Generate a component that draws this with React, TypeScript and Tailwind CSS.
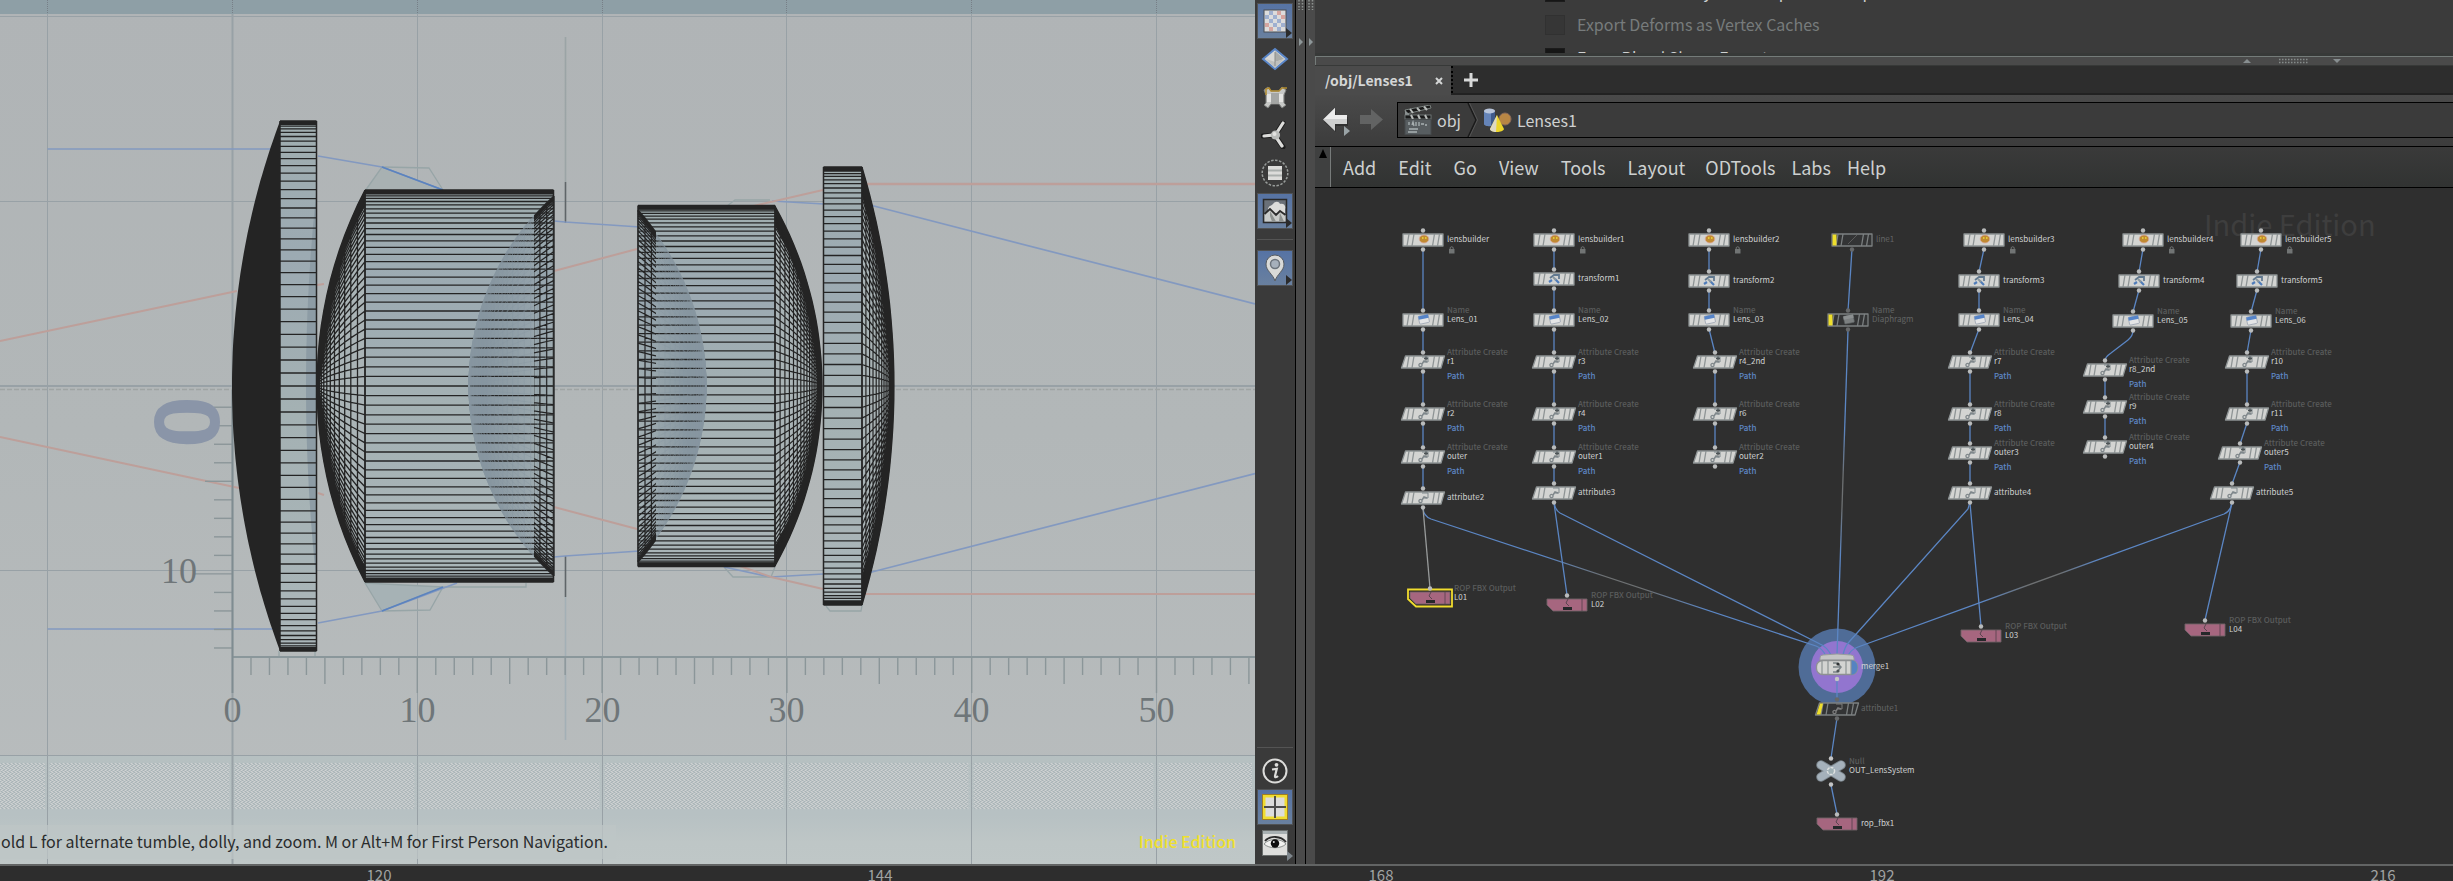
import React from "react";

/* ------------------------------------------------------------------ */
/* Lens geometry                                                       */
/* ------------------------------------------------------------------ */

const AXIS = 386;
const SEGMENTS = 128;
const INK = "#242424";

const STEPS = Array.from({ length: SEGMENTS / 2 + 1 }, (_, i) => i - SEGMENTS / 4);

function sagDepth(r: number, half: number, sag: number) {
  const radius = (half * half + sag * sag) / (2 * sag);
  return Math.sqrt(radius * radius - r * r) - (radius - sag);
}

function capPath(rim: number, dir: number, sag: number, half: number) {
  const pts: string[] = [];
  for (let i = -40; i <= 40; i++) {
    const r = (half * i) / 40;
    pts.push(`${(rim + dir * sagDepth(r, half, sag)).toFixed(1)},${(AXIS + r).toFixed(1)}`);
  }
  return `M${pts.join("L")}Z`;
}

function meshPath(rim: number, dir: number, sag: number, half: number, rings: number) {
  let d = "";
  for (let j = 1; j <= rings; j++) {
    const r = (half * j) / rings;
    const x = (rim + dir * sagDepth(r, half, sag)).toFixed(1);
    d += `M${x},${(AXIS - r).toFixed(1)}V${(AXIS + r).toFixed(1)}`;
  }
  for (const k of STEPS) {
    const s = Math.sin((k * 2 * Math.PI) / SEGMENTS);
    for (let j = 0; j <= rings; j++) {
      const r = (half * j) / rings;
      const x = (rim + dir * sagDepth(r, half, sag)).toFixed(1);
      d += `${j === 0 ? "M" : "L"}${x},${(AXIS + r * s).toFixed(1)}`;
    }
  }
  return d;
}

function barrelPath(x1: number, x2: number, half: number) {
  return STEPS.map((k) => {
    const y = AXIS + half * Math.sin((k * 2 * Math.PI) / SEGMENTS);
    return `M${x1},${y.toFixed(1)}H${x2}`;
  }).join("");
}

function Barrel({ x1, x2, half }: { x1: number; x2: number; half: number }) {
  return (
    <g fill="none" stroke={INK}>
      <path d={barrelPath(x1, x2, half)} strokeWidth={1.3} />
      <path d={`M${x1},${AXIS - half + 2}H${x2}M${x1},${AXIS + half - 2}H${x2}`} strokeWidth={4} />
      <path d={`M${x1},${AXIS - half}V${AXIS + half}M${x2},${AXIS - half}V${AXIS + half}`} strokeWidth={1.5} />
    </g>
  );
}

const GRID_X = [47.5, 232.5, 417.5, 602.5, 786.5, 971.5, 1156.5];

function SceneDrawing() {
  const hTicks = Array.from({ length: 55 }, (_, i) => i + 1);
  const vTicks = Array.from({ length: 14 }, (_, i) => i + 1);
  return (
    <svg
      className="absolute inset-0 h-full w-full"
      viewBox="0 0 1255 864"
      preserveAspectRatio="xMinYMin slice"
      aria-label="Side view of the lens stack"
    >
      <defs>
        <linearGradient id="sky" x1="0" y1="0" x2="0" y2="1">
          <stop offset="0" stopColor="#b0b4b6" />
          <stop offset="0.5" stopColor="#b2b7b8" />
          <stop offset="1" stopColor="#b9bdbe" />
        </linearGradient>
        <linearGradient id="floor" x1="0" y1="0" x2="0" y2="1">
          <stop offset="0" stopColor="#b6c0c1" />
          <stop offset="0.55" stopColor="#b7c1c3" />
          <stop offset="0.8" stopColor="#bec6c6" />
          <stop offset="1" stopColor="#bfc7c7" />
        </linearGradient>
        <linearGradient id="glass" x1="0" y1="0" x2="0" y2="1">
          <stop offset="0" stopColor="#a0aeb0" />
          <stop offset="0.25" stopColor="#9caab2" />
          <stop offset="0.55" stopColor="#a4b1b3" />
          <stop offset="0.9" stopColor="#a9b5b8" />
        </linearGradient>
        <linearGradient id="hollowL" x1="0" y1="0" x2="1" y2="0">
          <stop offset="0" stopColor="#8796a0" />
          <stop offset="0.18" stopColor="#8796a0" />
          <stop offset="1" stopColor="#8796a0" stopOpacity="0.1" />
        </linearGradient>
        <linearGradient id="hollowR" x1="1" y1="0" x2="0" y2="0">
          <stop offset="0" stopColor="#8796a0" />
          <stop offset="0.25" stopColor="#8796a0" />
          <stop offset="1" stopColor="#8796a0" stopOpacity="0.1" />
        </linearGradient>
        <pattern id="grain" width="4" height="4" patternUnits="userSpaceOnUse">
          <rect width="4" height="4" fill="#bcc3c4" />
          <path d="M0 .5h1M2 1.5h1M1 2.5h1M3 3.5h1" stroke="#cfd2d3" />
          <path d="M2 .5h1M0 1.5h1M3 2.5h1M1 3.5h1" stroke="#a7b3b7" />
        </pattern>
        <clipPath id="nearRim2">
          <rect x="534" y="186" width="22" height="400" />
        </clipPath>
        <clipPath id="nearRim3">
          <rect x="636" y="202" width="20" height="370" />
        </clipPath>
      </defs>

      <rect width="1255" height="864" fill="url(#sky)" />
      <rect width="1255" height="14" fill="#8e9fa6" />
      <rect y="756" width="1255" height="108" fill="url(#floor)" />
      {GRID_X.map((x, i) => (
        <rect key={x} x={x + 2} y="763" width={(GRID_X[i + 1] ?? 1255) - x - 5} height="46" fill="url(#grain)" />
      ))}
      <rect x="0" y="763" width="45" height="46" fill="url(#grain)" />

      {/* grid */}
      <g stroke="#98a1a6" fill="none">
        {GRID_X.map((x) => (
          <path key={x} d={`M${x},14V864`} strokeWidth={x === 232.5 ? 2 : 1} />
        ))}
        {GRID_X.map((x) => (
          <path key={x} d={`M${x},0V14`} stroke="#777f87" strokeDasharray="1 1" />
        ))}
        <path d="M0,16.5H1255M0,201.5H1255M0,570.5H1255M0,755.5H1255" strokeWidth="1" />
        <path d="M0,386H1255" strokeWidth="2" />
        <path d="M0,389.5H1255" stroke="#9fa4a3" strokeWidth="1.5" strokeDasharray="5 2" />
      </g>
      <rect y="825" width="616" height="34" fill="#bec6c6" opacity="0.75" />

      {/* aperture stop */}
      <g fill="none" strokeWidth="1.6">
        <path d="M565.5,37V182" stroke="#9ba4a6" />
        <path d="M565.5,597V740" stroke="#a3b0b6" />
        <path d="M565.5,182V223M565.5,556V597" stroke="#5f6568" />
      </g>

      {/* prescription outline behind the meshes */}
      <g stroke="#97a5a7" strokeWidth="1.3">
        <path d="M365,191L382,167L443,190Z" fill="#a8b1b2" />
        <path d="M382,167L429,168L443,190" fill="none" />
        <path d="M365,583L382,611L443,587Z" fill="#a6b2b5" />
        <path d="M382,611L430,610L443,587H526V583" fill="none" />
        <path d="M727,206L735,200H770M724,567L733,577H771L775,567M279,651V657H315V651M826,606L830,611H861L863,600" fill="none" />
      </g>

      {/* rays */}
      <g fill="none" stroke="#8399c0" strokeWidth="1.7">
        <path d="M47.5,149H272M318,156L382,167L443,190M554,221L565,222L640,227M772,201L824,204M870,205L1255,304" />
        <path d="M47.5,629H272M318,623L382,611L457,583M554,557L565,556L640,551M724,567L771,577L823,574M868,573L1255,473.500" />
      </g>
      <path d="M382,167L443,190M382,611L443,587" fill="none" stroke="#5b83bf" strokeWidth="1.5" />
      <g fill="none" stroke="#bd9f9a" strokeWidth="2">
        <path d="M0,341L237,291M317,285L324,284M554,271L637,249M745,208L823,190" />
        <path d="M865,184H1255" strokeWidth="2.6" />
        <path d="M0,437L239,488M318,493L324,495M554,507L637,529M740,566L771,577L823,589M865,594H1255" />
      </g>

      {/* rulers */}
      <g stroke="#8b9699" strokeWidth="1.4" fill="none">
        <path d="M232,657H1255" stroke="#8a979b" strokeWidth="1.8" />
        {hTicks.map((i) => (
          <path key={i} d={`M${232.5 + i * 18.48},657V${i % 10 === 0 ? 693 : i % 5 === 0 ? 684 : 675}`} />
        ))}
        {vTicks.map((i) => (
          <path key={i} d={`M${i === 10 ? 195 : i === 5 ? 205 : 214},${388.7 + i * 18.52}H232`} />
        ))}
        <path d="M232.500,390V693" stroke="#7f8c91" strokeWidth="1.8" />
      </g>
      <g fill="#6f7679" fontFamily="Liberation Serif, serif" fontSize="36" textAnchor="middle">
        {["0", "10", "20", "30", "40", "50"].map((t, i) => (
          <text key={t} x={GRID_X[i + 1]} y="722">
            {t}
          </text>
        ))}
        <text x="179" y="583">
          10
        </text>
      </g>
      <text
        x="187"
        y="422"
        transform="rotate(90 187 422)"
        fontFamily="Liberation Sans, sans-serif"
        fontWeight="700"
        fontSize="93"
        textAnchor="middle"
        dy="32"
        fill="#8a95a8"
      >
        0
      </text>

      {/* element 1 */}
      <rect x="280" y="121" width="37" height="530" fill="url(#glass)" />
      <path d={capPath(317, -1, 11, 200)} fill="#8d9ca5" />
      <path d={capPath(280, -1, 48, 265)} fill={INK} />
      <Barrel x1={280} x2={316.500} half={265} />

      {/* element 2 */}
      <path d={capPath(365, -1, 48, 196)} fill={INK} />
      <path d={capPath(365, -1, 46, 180)} fill="#aab4b6" />
      <rect x="365" y="190" width="189" height="392" fill="url(#glass)" />
      <path d={capPath(554, -1, 85, 192)} fill="url(#hollowL)" />
      <Barrel x1={365} x2={553.500} half={196} />
      <path d={meshPath(365, -1, 48, 196, 13)} fill="none" stroke={INK} strokeWidth="1.3" />
      <path d={meshPath(554, -1, 85, 190, 24)} fill="none" stroke="#8797a1" strokeWidth="0.5" opacity="0.8" />
      <path d={meshPath(554, -1, 85, 190, 28)} fill="none" stroke={INK} strokeWidth="1.2" clipPath="url(#nearRim2)" />

      {/* element 3 */}
      <path d={capPath(775, 1, 47, 180)} fill={INK} />
      <path d={capPath(775, 1, 42, 160)} fill="#a9b3b5" />
      <rect x="638" y="206" width="137" height="360" fill="url(#glass)" />
      <path d={capPath(638, 1, 68, 174)} fill="url(#hollowR)" />
      <Barrel x1={638} x2={775} half={180.500} />
      <path d={meshPath(775, 1, 47, 180, 19)} fill="none" stroke={INK} strokeWidth="1.2" />
      <path d={meshPath(638, 1, 68, 174, 20)} fill="none" stroke="#8797a1" strokeWidth="0.5" opacity="0.8" />
      <path d={meshPath(638, 1, 68, 176, 22)} fill="none" stroke={INK} strokeWidth="1.2" clipPath="url(#nearRim3)" />

      {/* element 4 */}
      <path d={capPath(862, 1, 32, 219)} fill={INK} />
      <path d={capPath(862, 1, 27, 190)} fill="#a9b3b5" />
      <rect x="823" y="167" width="39" height="438" fill="url(#glass)" />
      <Barrel x1={823.500} x2={862} half={219} />
      <path d={meshPath(862, 1, 32, 219, 16)} fill="none" stroke={INK} strokeWidth="1.2" />
    </svg>
  );
}

function Viewport() {
  return (
    <section className="relative min-w-0 flex-[1255_1_0px] overflow-hidden bg-[#b2b6b8]">
      <SceneDrawing />
      <div className="absolute inset-x-0 bottom-[11px] flex items-center justify-between pr-[19px] pl-px whitespace-nowrap">
        <p className="text-base leading-6 text-[#2a2c2d]">
          old L for alternate tumble, dolly, and zoom. M or Alt+M for First Person Navigation.
        </p>
        <p className="text-base leading-6 font-medium text-[#efe02c]">Indie Edition</p>
      </div>
    </section>
  );
}

/* ------------------------------------------------------------------ */
/* Display options toolbar                                             */
/* ------------------------------------------------------------------ */

function ToolButton({
  label,
  active = false,
  menu = false,
  children,
}: {
  label: string;
  active?: boolean;
  menu?: boolean;
  children: React.ReactNode;
}) {
  return (
    <button
      type="button"
      aria-label={label}
      className={
        active
          ? "relative flex h-9 w-9 items-center justify-center border border-[#505254] bg-linear-to-b from-[#5673a4] to-[#69809f]"
          : "relative flex h-9 w-9 items-center justify-center"
      }
    >
      <svg width="28" height="28" viewBox="0 0 28 28" aria-hidden="true">
        {children}
      </svg>
      {menu && (
        <svg className="absolute right-0 bottom-0" width="6" height="10" viewBox="0 0 6 10" aria-hidden="true">
          <path d="M0 0L6 5L0 10Z" fill={active ? "#2b2b2b" : "#7e868c"} />
        </svg>
      )}
    </button>
  );
}

function DisplayToolbar() {
  const checks = [0, 1, 2, 3, 4].flatMap((r) => [0, 1, 2, 3, 4].map((c) => [r, c] as const));
  const checkFill = (r: number, c: number) => {
    if ((r + c) % 2 === 1) return (r * 2 + c) % 3 === 0 ? "#d5a5a0" : "#9fb0d0";
    return "#dcdcdc";
  };
  return (
    <aside className="flex w-10 shrink-0 flex-col items-center justify-between bg-[#3a3a3a] pt-[3px] pb-[3px]">
      <div className="flex flex-col items-center gap-[2px]">
        <ToolButton label="Background image" active menu>
          <rect x="3" y="3" width="22" height="22" fill="#d9d9d9" stroke="#4a4e54" />
          {checks.map(([r, c]) => (
            <rect key={`${r}${c}`} x={4 + c * 4} y={4 + r * 4} width="4" height="4" fill={checkFill(r, c)} />
          ))}
        </ToolButton>
        <ToolButton label="Shaded geometry">
          <path d="M14 4L26 14L14 24L2 14Z" fill="#d7d7d5" stroke="#5a86c8" strokeWidth="2" />
          <path d="M14 6L23 14L14 17Z" fill="#a9aba9" />
          <path d="M5 14L14 17L23 14L14 23Z" fill="#bfc0be" />
          <path d="M14 7V21" stroke="#8b8d8b" />
        </ToolButton>
        <ToolButton label="Bones">
          <path d="M3 7L7 4L10 8H18L21 4L25 7L23 12V20L25 22L21 25L18 21H10L7 25L3 22L5 20V12Z" fill="#c7c8c6" stroke="#7d7f7d" />
          <path d="M5 12V6L8 5L10 8H18L21 5H26" fill="none" stroke="#b08a2e" strokeWidth="1.500" />
          <rect x="10" y="10" width="8" height="10" fill="#a4a6a4" />
          <path d="M6 11h4v8H6zM18 11h4v8h-4z" fill="#e4e4e2" />
        </ToolButton>
        <ToolButton label="Origin gnomon">
          <path d="M2 15L13 14M22 2L15 13M22 26L15 16" stroke="#1d1d1d" strokeWidth="5" strokeLinecap="round" />
          <path d="M3 15L13 14M22 2L15 13M21 25L15 16" stroke="#dcdcda" strokeWidth="3.200" strokeLinecap="round" />
          <circle cx="14.500" cy="14" r="4.600" fill="#b9bbb9" />
          <circle cx="13.500" cy="13" r="2" fill="#e2e2e0" />
        </ToolButton>
        <ToolButton label="Field guide">
          <circle cx="14" cy="14" r="12.800" fill="none" stroke="#989c9a" strokeWidth="1.500" strokeDasharray="2.500 1.500" />
          <rect x="7" y="7" width="14" height="14" fill="#dcdcda" />
          <path d="M7 11.500h14M7 16.500h14" stroke="#a9aeac" strokeWidth="2" />
        </ToolButton>
        <ToolButton label="Environment" active menu>
          <rect x="2.500" y="2.500" width="23" height="23" fill="#6a7078" stroke="#2a2a2a" strokeWidth="1.500" />
          <path d="M7 13C7 9 10 9 12 7C14 4 18 4 19 7C23 6 25 9 24 12V16H7Z" fill="#dcdcda" />
          <path d="M3.500 24.500V17L9 12L15 18L19 14L24.500 18V24.500Z" fill="#c9cbc9" />
          <path d="M3.500 17L9 12L15 18L19 14L24.500 18" fill="none" stroke="#2c2c2c" strokeWidth="1.800" />
          <path d="M9 14L15 24.500H11L9 19ZM19 16L23 24.500H18Z" fill="#8e9290" />
        </ToolButton>
        <div className="my-2 h-px w-9 bg-[#545454]" />
        <ToolButton label="Pin view" active menu>
          <path d="M14 27C12 20 5 17 5 10A9 9 0 0 1 23 10C23 17 16 20 14 27Z" fill="#d9dad8" stroke="#585c60" />
          <circle cx="14" cy="10" r="4.500" fill="#a6b0bb" stroke="#6c747c" strokeWidth="1.500" />
        </ToolButton>
      </div>
      <div className="flex flex-col items-center">
        <div className="mb-[5px] h-px w-9 bg-[#545454]" />
        <ToolButton label="Information">
          <circle cx="14" cy="14" r="11.500" fill="#333" stroke="#dcdcda" strokeWidth="2" />
          <circle cx="15.500" cy="7.800" r="1.900" fill="#dcdcda" />
          <path d="M11 12.500L15.800 11.800L14 19C13.800 20.800 15.500 20.500 17 19" fill="none" stroke="#dcdcda" strokeWidth="2.200" />
        </ToolButton>
        <ToolButton label="View layout" active>
          <rect x="3" y="3" width="22" height="22" fill="#dcdcdc" stroke="#efdc2f" strokeWidth="3" />
          <path d="M14 3V25M3 14H25" stroke="#4d4d4d" strokeWidth="2" />
          <rect x="1.500" y="1.500" width="25" height="25" fill="none" stroke="#a07f20" />
        </ToolButton>
        <ToolButton label="Display options" menu>
          <rect x="1.500" y="1.500" width="25" height="25" fill="#dededc" stroke="#6b6f6e" />
          <rect x="2" y="2" width="24" height="3" fill="#a8b0b2" />
          <path d="M3 15C8 9 20 9 25 15C20 20 8 20 3 15Z" fill="#f1f1ef" stroke="#8a8e8c" />
          <path d="M4 12C9 6 20 7 25 13" fill="none" stroke="#2c2c2c" strokeWidth="1.800" />
          <circle cx="14" cy="14.500" r="4.200" fill="#0e0e0e" />
          <circle cx="12.800" cy="13" r="1" fill="#ddd" />
        </ToolButton>
      </div>
    </aside>
  );
}

function VerticalSplitter() {
  return (
    <div className="flex w-[10px] shrink-0 flex-col items-center border-l border-black bg-[#4a4a4a]">
      <svg width="9" height="50" viewBox="0 0 9 50" aria-hidden="true">
        <path d="M3 0V10M6.500 0V10" stroke="#8d9290" strokeWidth="1.500" strokeDasharray="1.500 1.500" />
        <path d="M3 38L7 42L3 46Z" fill="#8d9698" />
      </svg>
    </div>
  );
}

/* ------------------------------------------------------------------ */
/* Parameter strip, tabs, path and menus                               */
/* ------------------------------------------------------------------ */

function ParameterStrip() {
  const rows = [
    { label: "Conserve Memory at the Expense of Export Time", off: false },
    { label: "Export Deforms as Vertex Caches", off: true },
    { label: "Force Blend Shape Export", off: false },
  ];
  return (
    <div className="flex h-[53px] shrink-0 flex-col justify-center overflow-hidden bg-[#3b3b3b] pb-1 pl-[230px]">
      {rows.map((row) => (
        <label
          key={row.label}
          className={
            row.off
              ? "flex h-[33px] shrink-0 items-center gap-3 text-base leading-[33px] whitespace-nowrap text-[#777b7c]"
              : "flex h-[33px] shrink-0 items-center gap-3 text-base leading-[33px] whitespace-nowrap text-[#d0d2d2]"
          }
        >
          <input
            type="checkbox"
            disabled={row.off}
            className={
              row.off
                ? "h-5 w-5 appearance-none border border-[#313131] bg-[#363636]"
                : "h-5 w-5 appearance-none border border-[#1c1c1c] bg-[#161616]"
            }
          />
          {row.label}
        </label>
      ))}
    </div>
  );
}

function HorizontalSplitter() {
  return (
    <div className="flex h-[13px] shrink-0 flex-col bg-[#373938] pt-[3px]">
      <div className="flex h-[9px] justify-end border-t border-l border-[#747b79] bg-[#4a4a4a] pr-[112px]">
        <svg width="98" height="8" viewBox="0 0 98 8" aria-hidden="true">
          <path d="M0 6L4 2L8 6ZM90 2H98L94 6Z" fill="#878e90" />
          <path d="M36 2.500H66M36 5.500H66" stroke="#858b8a" strokeWidth="1.500" strokeDasharray="1.500 1.500" />
        </svg>
      </div>
    </div>
  );
}

function TabRow() {
  return (
    <div className="flex h-[29px] shrink-0 border-b-2 border-[#222] bg-[#2d2d2d]">
      <div className="-mb-[2px] flex w-[136px] items-center justify-between bg-[#4b4b4b] pr-[8px] pl-[10px]">
        <a href="#lenses" className="text-sm leading-[27px] font-bold text-[#d4d6d6]">
          /obj/Lenses1
        </a>
        <button type="button" aria-label="Close tab" className="flex h-4 w-[8px] items-center">
          <svg width="8" height="8" viewBox="0 0 8 8" aria-hidden="true">
            <path d="M1 1L7 7M7 1L1 7" stroke="#d4d6d6" strokeWidth="2" />
          </svg>
        </button>
      </div>
      <button type="button" aria-label="New tab" className="flex w-[38px] items-center justify-center border-l-2 border-dotted border-black">
        <svg width="16" height="16" viewBox="0 0 16 16" aria-hidden="true">
          <path d="M8 1V15M1 8H15" stroke="#d8d9d9" strokeWidth="3" />
        </svg>
      </button>
    </div>
  );
}

function PathBar() {
  return (
    <div className="flex h-[51px] shrink-0 bg-linear-to-b from-[#4a4a4a] to-[#3c3c3c] pt-[7px] pb-2">
      <div className="flex w-[82px] shrink-0 items-center gap-[6px] pl-[8px]">
        <button type="button" aria-label="Back" className="h-8">
          <svg width="30" height="32" viewBox="0 0 30 32" aria-hidden="true">
            <path d="M13 7V13H25V22H13V28L1 18Z" fill="#1f1f1f" opacity="0.500" />
            <path d="M12 4V11H24V20H12V27L0 15.500Z" fill="#cfd0d0" />
            <path d="M12 4V11H24V15H1Z" fill="#ececec" />
            <path d="M21 22L27 27L21 32Z" fill="#9aa3a6" />
          </svg>
        </button>
        <button type="button" aria-label="Forward" className="h-8">
          <svg width="24" height="32" viewBox="0 0 24 32" aria-hidden="true">
            <path d="M12 5V11H1V20H12V26L24 15.500Z" fill="#626363" />
          </svg>
        </button>
      </div>
      <nav aria-label="Network path" className="flex min-w-0 flex-1 items-center border border-r-0 border-black bg-[#3b3b3b] pl-[6px] text-base leading-8 text-[#cfd1d1]">
        <svg width="28" height="30" viewBox="0 0 28 30" aria-hidden="true">
          <path d="M1 5L26 0L27 3L2 9Z" fill="#161616" stroke="#8c9492" strokeWidth="0.800" />
          <path d="M6 4L9 8M13 3L16 6M20 1.500L23 5" stroke="#b8bcba" strokeWidth="2" />
          <path d="M1 5L5 9V12H1Z" fill="#8a9090" />
          <rect x="1" y="10" width="26" height="4" fill="#1b1b1b" stroke="#7c8484" strokeWidth="0.800" />
          <path d="M7 10L9 14M14 10L16 14M21 10L23 14" stroke="#b8bcba" strokeWidth="2" />
          <rect x="1" y="14.500" width="26" height="15" fill="#575d60" stroke="#474b4d" />
          <path d="M5 20V17M8 20L9 17L10 21M12 17V21M15 21V17M17 19H20M21 20H23M5 24H14M4 27H13" stroke="#a9b1b2" strokeWidth="1.300" fill="none" />
        </svg>
        <a href="#obj" className="pl-[5px]">
          obj
        </a>
        <svg className="ml-[6px] h-full" width="11" height="34" viewBox="0 0 11 34" aria-hidden="true">
          <path d="M1 0L9 17L1 34" fill="none" stroke="#1a1a1a" strokeWidth="1.500" />
          <path d="M2.500 0L10.500 17L2.500 34" fill="none" stroke="#555" />
        </svg>
        <svg className="ml-[5px]" width="29" height="26" viewBox="0 0 29 26" aria-hidden="true">
          <path d="M1 4V17C1 20 12 20 12 17V4Z" fill="#6584b8" />
          <path d="M8 4V19L12 17V4Z" fill="#3e5a8c" />
          <ellipse cx="6.500" cy="4" rx="5.500" ry="2.500" fill="#b7c4da" />
          <circle cx="22" cy="12" r="6" fill="#b88644" stroke="#8a6a5a" />
          <path d="M14 8L21 22C20 26 8 26 7 22Z" fill="#ecd52a" />
          <path d="M14 8L13 25C10 25 7 24 7 22Z" fill="#ded9c4" />
        </svg>
        <a href="#lenses1" className="pl-[5px]">
          Lenses1
        </a>
      </nav>
    </div>
  );
}

function MenuBar() {
  const groups = [
    { gap: "flex gap-[22px]", items: ["Add", "Edit", "Go", "View", "Tools", "Layout"] },
    { gap: "flex gap-4", items: ["ODTools", "Labs", "Help"] },
  ];
  return (
    <div className="flex h-[42px] shrink-0 border-y border-black bg-linear-to-b from-[#3a3a3a] to-[#313332]">
      <button type="button" aria-label="Collapse menu" className="flex w-4 justify-center border-r border-[#777b7a] bg-[#3f4040] pt-[2px]">
        <svg width="8" height="9" viewBox="0 0 8 9" aria-hidden="true">
          <path d="M4 0L8 9H0Z" fill="#000" />
        </svg>
      </button>
      <div className="flex items-center gap-5 pl-3">
        {groups.map((group) => (
          <div key={group.gap} className={group.gap}>
            {group.items.map((item) => (
              <button key={item} type="button" className="pb-px text-lg leading-[38px] text-[#cdd0d0]">
                {item}
              </button>
            ))}
          </div>
        ))}
      </div>
    </div>
  );
}

/* ------------------------------------------------------------------ */
/* Node network                                                        */
/* ------------------------------------------------------------------ */

type Kind = "lens" | "xform" | "name" | "create" | "attr" | "rop" | "merge" | "null" | "line";

interface NodeData {
  id: string;
  x: number;
  y: number;
  kind: Kind;
  type?: string;
  dim?: boolean;
  selected?: boolean;
}

const lens = (id: string, x: number): NodeData => ({ id, x, y: 240, kind: "lens" });
const xform = (id: string, x: number, y = 281): NodeData => ({ id, x, y, kind: "xform" });
const named = (id: string, x: number, y = 320): NodeData => ({ id, x, y, kind: "name", type: "Name" });
const create = (id: string, x: number, y: number): NodeData => ({ id, x, y, kind: "create", type: "Attribute Create" });
const attr = (id: string, x: number, y = 493): NodeData => ({ id, x, y, kind: "attr" });
const rop = (id: string, x: number, y: number): NodeData => ({ id, x, y, kind: "rop", type: "ROP FBX Output" });

const CHAINS: NodeData[][] = [
  [lens("lensbuilder", 1423), named("Lens_01", 1423), create("r1", 1423, 362), create("r2", 1423, 414), create("outer", 1423, 457), attr("attribute2", 1423, 498)],
  [lens("lensbuilder1", 1554), xform("transform1", 1554, 279), named("Lens_02", 1554), create("r3", 1554, 362), create("r4", 1554, 414), create("outer1", 1554, 457), attr("attribute3", 1554)],
  [lens("lensbuilder2", 1709), xform("transform2", 1709), named("Lens_03", 1709), create("r4_2nd", 1715, 362), create("r6", 1715, 414), create("outer2", 1715, 457)],
  [
    { id: "line1", x: 1852, y: 240, kind: "line", dim: true },
    { id: "Diaphragm", x: 1848, y: 320, kind: "name", type: "Name", dim: true },
  ],
  [lens("lensbuilder3", 1984), xform("transform3", 1979), named("Lens_04", 1979), create("r7", 1970, 362), create("r8", 1970, 414), create("outer3", 1970, 453), attr("attribute4", 1970)],
  [lens("lensbuilder4", 2143), xform("transform4", 2139), named("Lens_05", 2133, 321), create("r8_2nd", 2105, 370), create("r9", 2105, 407), create("outer4", 2105, 447)],
  [lens("lensbuilder5", 2261), xform("transform5", 2257), named("Lens_06", 2251, 321), create("r10", 2247, 362), create("r11", 2247, 414), create("outer5", 2240, 453), attr("attribute5", 2232)],
];

const OTHERS: NodeData[] = [
  { ...rop("L01", 1430, 598), selected: true },
  rop("L02", 1567, 605),
  rop("L03", 1981, 636),
  rop("L04", 2205, 630),
  { id: "merge1", x: 1837, y: 667, kind: "merge" },
  { id: "attribute1", x: 1837, y: 709, kind: "attr", dim: true },
  { id: "OUT_LensSystem", x: 1831, y: 771, kind: "null", type: "Null" },
  { id: "rop_fbx1", x: 1837, y: 824, kind: "rop" },
];

const NODES = [...CHAINS.flat(), ...OTHERS];
const ORIGIN_X = 1315;
const ORIGIN_Y = 188;

function linkPath(a: NodeData, b: NodeData) {
  const y1 = a.y + 9;
  const y2 = b.y - 9;
  if (Math.abs(a.x - b.x) > 20) {
    return `M${a.x},${y1}Q${a.x},${y1 + 6} ${a.x - 5},${y1 + 10}L${b.x + 6},${y2 - 8}Q${b.x},${y2 - 4} ${b.x},${y2}`;
  }
  return `M${a.x},${y1}L${b.x},${y2}`;
}

function NodeIcon({ kind, dim }: { kind: Kind; dim?: boolean }) {
  if (kind === "lens")
    return (
      <g>
        <ellipse cx="1" cy="-1" rx="4.800" ry="4" fill="#c08a32" stroke="#d9a9a0" strokeWidth="0.800" />
        <path d="M-1 -2h1.500M2 -2h1.500" stroke="#f1dc3a" strokeWidth="1.300" />
      </g>
    );
  if (kind === "xform")
    return (
      <g>
        <path d="M-4 -1L0 -4H5V0" fill="none" stroke="#62798f" strokeWidth="1.800" />
        <path d="M-5 3L-2 1M1 0L5 4" stroke="#4f7cba" strokeWidth="2.200" />
        <path d="M-1 -2L2 1" stroke="#8a979f" strokeWidth="2" />
      </g>
    );
  if (kind === "name")
    return (
      <g transform="rotate(-12)">
        <rect x="-4" y="-4.500" width="10" height="8" rx="1" fill={dim ? "#7b7f80" : "#e4e5e6"} stroke={dim ? "#55595a" : "#8a95a5"} strokeWidth="0.600" />
        <rect x="-4" y="-4.500" width="10" height="3.500" fill={dim ? "#8b8f90" : "#5684c8"} />
      </g>
    );
  if (kind === "line") return <path d="M-4 4L5 -5" stroke="#5a5a5a" />;
  return (
    <g fill="none" stroke={dim ? "#7d7d7d" : "#7f878b"}>
      <circle cx="-2.500" cy="3" r="1.600" strokeWidth="1.300" />
      <path d="M-1 2L1 -1L4 0" strokeWidth="1.500" />
      <path d="M-1 -5H5V0H1" strokeWidth="1" />
      {kind === "create" && <path d="M1 -3.500H5M3 -5.500V-1.500" stroke="#4c5356" strokeWidth="1.300" />}
    </g>
  );
}

function Dots({ node, top = true, bottom = true }: { node: NodeData; top?: boolean; bottom?: boolean }) {
  const fill = node.dim ? "#666869" : "#b9bbbb";
  return (
    <g fill={fill}>
      {top && <circle cx={node.x} cy={node.y - 9.500} r="2.200" />}
      {bottom && <circle cx={node.x} cy={node.y + 9.500} r="2.200" />}
    </g>
  );
}

function NodeShape({ node }: { node: NodeData }) {
  const { x, y, kind, dim } = node;
  const body = dim ? "#333435" : "#d3d4d2";
  const edge = dim ? "#7c8081" : "#8d9394";
  if (kind === "rop") {
    return (
      <g>
        <g transform={`translate(${x} ${y})`}>
          {node.selected && <path d="M-22 -8.500H22V8.500H-14L-22 1Z" fill="#2a2420" stroke="#f0dc2e" strokeWidth="1.800" />}
          <path d="M-20 -6H20V6H-14L-20 0Z" fill="#a6667f" stroke="#6f6268" strokeWidth="0.900" />
          <path d="M15 -6V6" stroke="#5b4450" strokeWidth="0.900" />
          <path d="M1 -6L-1 -2L2 1" fill="none" stroke="#5a4650" />
          <rect x="-4" y="2" width="9" height="3" fill="#26282a" />
        </g>
        <Dots node={node} bottom={false} />
      </g>
    );
  }
  if (kind === "merge") {
    return (
      <g>
        <g transform={`translate(${x} ${y})`}>
          <path d="M-17 -7V-9Q-17 -12 -14 -12Q0 -14 14 -12Q17 -12 17 -9V-7Z" fill="#c4c5c5" stroke="#9a9c9c" />
          <rect x="-20.500" y="-6.500" width="41" height="14" rx="6" fill={body} stroke="#8e9192" strokeWidth="1.300" />
          <path d="M14 -6.500H16Q20.500 -5 20.500 0.500Q20.500 6 16 7.500H14Z" fill="#5583c2" />
          <path d="M-15 -6V7M-9 -6V7M9 -6V7M14 -6V7" stroke={edge} strokeWidth="1.200" />
          <path d="M-4 -4H0L4 0L0 5H-4M-4 0H3" fill="none" stroke="#7c8488" strokeWidth="1.500" />
          <circle cx="1" cy="-3" r="1.600" fill="#2e3234" />
          <circle cx="1" cy="4" r="1.600" fill="#4e5558" />
        </g>
        <circle cx={x} cy={y + 12} r="2.200" fill="#c4c5c5" />
      </g>
    );
  }
  if (kind === "null") {
    return (
      <g>
        <g transform={`translate(${x} ${y})`}>
          <path d="M-10 -6L10 6M10 -6L-10 6" stroke="#7b858c" strokeWidth="9.500" strokeLinecap="round" />
          <path d="M-10 -6L10 6M10 -6L-10 6" stroke="#a5b1bb" strokeWidth="7.500" strokeLinecap="round" />
          <circle r="3.600" fill="#9fb0b5" stroke="#dde0e0" strokeWidth="1.500" strokeDasharray="3 1" />
        </g>
        <circle cx={x} cy={y - 12.500} r="2.200" fill="#c4c5c5" />
        <circle cx={x} cy={y + 13.500} r="2.200" fill="#c4c5c5" />
      </g>
    );
  }
  const slanted = kind === "create" || kind === "attr";
  return (
    <g>
      <g transform={`translate(${x} ${y})`}>
        <path
          d={slanted ? "M-17.500 -6H21.500L18 6H-21.500Z" : "M-20 -6H20V6H-20Z"}
          fill={body}
          stroke={edge}
          strokeWidth="1.300"
          strokeLinejoin="round"
        />
        <path d="M-14 -6L-16 6M-9 -6L-11 6M11.500 -6L9.500 6M16.500 -6L14.500 6" stroke={edge} strokeWidth="1.300" />
        {dim && <path d={slanted ? "M-17 -5.500H-14L-16.500 5.500H-20.500Z" : "M-19.500 -5.500H-15.500V5.500H-19.500Z"} fill="#efdf2c" />}
        <NodeIcon kind={kind} dim={dim} />
      </g>
      <Dots node={node} top={kind !== "line"} />
      {kind === "lens" && (
        <g fill="#717474">
          <rect x={x + 26} y={y + 9} width="5.500" height="4.500" />
          <path d={`M${x + 27.2},${y + 9}V${y + 7.5}Q${x + 28.7},${y + 6} ${x + 30.2},${y + 7.5}V${y + 9}`} fill="none" stroke="#717474" />
        </g>
      )}
    </g>
  );
}

function NodeLabel({ node }: { node: NodeData }) {
  const offset = node.kind === "null" ? 18 : 24;
  const left = node.x + offset - ORIGIN_X;
  return (
    <div className="absolute whitespace-nowrap" style={{ left, top: node.y - ORIGIN_Y - 15 }}>
      <p className="h-[9px] text-[8px] leading-[9px] font-medium text-[#5a5c5c]">{node.type}</p>
      <p className={node.dim ? "text-[8px] leading-[10px] text-[#646666]" : "text-[8px] leading-[10px] text-[#d0d2d2]"}>{node.id}</p>
      {node.kind === "create" && <p className="pt-[5px] text-[8px] leading-[9px] font-medium text-[#5e88c6]">Path</p>}
    </div>
  );
}

function NetworkEditor() {
  return (
    <div className="relative min-h-0 flex-1 overflow-hidden bg-[#2f2f2f]">
      <p className="absolute top-[18px] left-[889px] text-[29px] leading-[34px] whitespace-nowrap text-[#3e3e3e]">Indie Edition</p>
      <svg className="absolute top-0 left-0" width="1138" height="676" viewBox="1315 188 1138 676" aria-label="Node network">
        <defs>
          <linearGradient id="wireA" gradientUnits="userSpaceOnUse" x1="1423" y1="0" x2="1828" y2="0">
            <stop offset="0.300" stopColor="#5b86c4" />
            <stop offset="0.450" stopColor="#6d7072" />
            <stop offset="0.550" stopColor="#6d7072" />
            <stop offset="0.700" stopColor="#5b86c4" />
          </linearGradient>
          <linearGradient id="wireB" gradientUnits="userSpaceOnUse" x1="1848" y1="0" x2="2232" y2="0">
            <stop offset="0.350" stopColor="#5b86c4" />
            <stop offset="0.470" stopColor="#6d7072" />
            <stop offset="0.550" stopColor="#6d7072" />
            <stop offset="0.650" stopColor="#5b86c4" />
          </linearGradient>
          <linearGradient id="wireC" gradientUnits="userSpaceOnUse" x1="0" y1="330" x2="0" y2="653">
            <stop offset="0.300" stopColor="#5b86c4" />
            <stop offset="0.450" stopColor="#6d7072" />
            <stop offset="0.550" stopColor="#6d7072" />
            <stop offset="0.700" stopColor="#5b86c4" />
          </linearGradient>
        </defs>
        <circle cx="1837" cy="667" r="38.500" fill="#4f6c97" />
        <circle cx="1837" cy="667" r="26" fill="#9275cf" />
        <g fill="none" stroke="#5b86c4" strokeWidth="1.300">
          {CHAINS.map((chain) =>
            chain.slice(1).map((node, i) => <path key={node.id} d={linkPath(chain[i], node)} />),
          )}
          <path d="M1423,507Q1423,516 1431,519L1816,646Q1822,648 1826,656" stroke="url(#wireA)" />
          <path d="M1554,502Q1555,510 1560,513L1820,644Q1827,647 1831,655" />
          <path d="M1848,330L1837,655" stroke="url(#wireC)" />
          <path d="M1970,502L1968,509L1849,642Q1845,646 1843,655" />
          <path d="M2232,502Q2231,511 2224,514L1858,647Q1850,650 1848,656" stroke="url(#wireB)" />
          <path d="M1423,508L1430,588" stroke="#989b9b" />
          <path d="M1554,503L1567,595M1970,503L1981,626M2232,503L2205,620" />
          <path d="M1837,679L1837,699M1837,718L1831,758M1831,785L1837,814" />
        </g>
        {NODES.map((node) => (
          <NodeShape key={node.id} node={node} />
        ))}
      </svg>
      {NODES.map((node) => (
        <NodeLabel key={node.id} node={node} />
      ))}
    </div>
  );
}

/* ------------------------------------------------------------------ */
/* Timeline                                                            */
/* ------------------------------------------------------------------ */

function Timeline() {
  return (
    <footer className="flex h-[17px] shrink-0 overflow-hidden border-t-2 border-[#626464] bg-[#2d2d2d] pl-[5.24%]">
      {[120, 144, 168, 192, 216].map((frame) => (
        <span key={frame} className="w-[20.42%] shrink-0 grow-0 basis-[501px] text-center text-[15px] leading-[17px] text-[#a0a2a2]">
          {frame}
        </span>
      ))}
    </footer>
  );
}

export default function App() {
  return (
    <main className="flex h-screen flex-col overflow-hidden bg-[#2d2d2d] font-['Noto_Sans_CJK_SC','Noto_Sans',sans-serif]">
      <div className="flex min-h-0 flex-1">
        <Viewport />
        <DisplayToolbar />
        <VerticalSplitter />
        <VerticalSplitter />
        <section className="flex min-w-0 flex-[1138_1_0px] flex-col">
          <ParameterStrip />
          <HorizontalSplitter />
          <TabRow />
          <PathBar />
          <MenuBar />
          <NetworkEditor />
        </section>
      </div>
      <Timeline />
    </main>
  );
}
